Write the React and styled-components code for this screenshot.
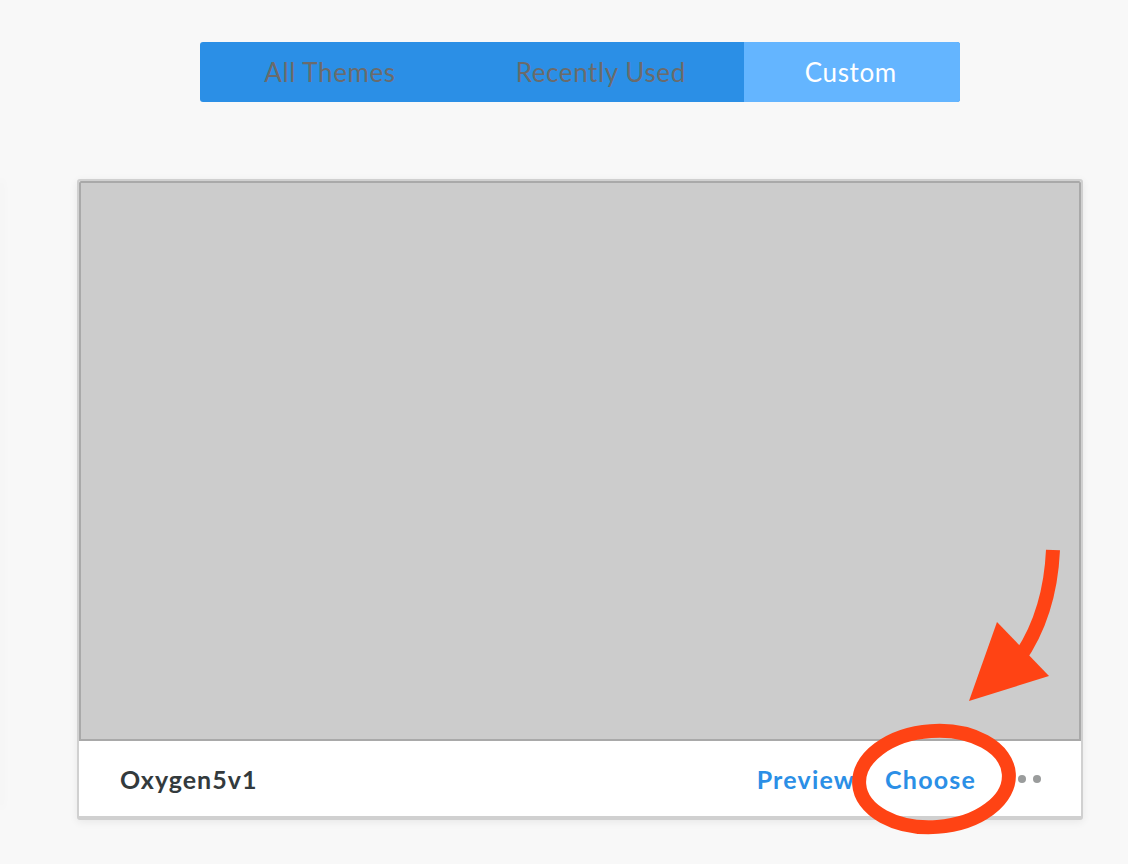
import React from "react"
import styled, { createGlobalStyle } from "styled-components"

const GlobalStyle = createGlobalStyle`
	html, body {
		margin: 0;
		padding: 0;
		background: #f8f8f8;
		overflow: hidden;
	}
	body {
		font-family: "Lato", "Open Sans", sans-serif;
	}
`

const Page = styled.div`
	width: 1128px;
	height: 864px;
	padding-top: 42px;
	box-sizing: border-box;
	background: #f8f8f8;
`

const TabsWrap = styled.div`
	display: flex;
	justify-content: center;
	padding-left: 32px;
`

const Tabs = styled.nav`
	display: flex;
	height: 60px;
	border-radius: 3px;
	overflow: hidden;
	background: #2b8fe6;
`

const Tab = styled.button`
	border: 0;
	margin: 0;
	padding: 0 ${p => p.$pr || 60}px 0 ${p => p.$pl || 60}px;
	height: 100%;
	font-family: "Lato", sans-serif;
	font-size: 26px;
	font-weight: 400;
	letter-spacing: 0.6px;
	background: ${p => (p.$active ? "#64b5ff" : "transparent")};
	color: ${p => (p.$active ? "#ffffff" : "#6b6b6b")};
	cursor: pointer;
`

const Carousel = styled.div`
	display: flex;
	margin-top: 77px;
`

const PeekEdge = styled.div`
	width: 2px;
	height: 630px;
	margin-left: -2px;
	box-shadow: 2px 0 10px rgba(0, 0, 0, 0.06);
	background: #f8f8f8;
`

const Card = styled.article`
	position: relative;
	width: 1006px;
	margin-left: 77px;
	box-sizing: border-box;
	border: 2px solid #d0d0d0;
	border-bottom-width: 4px;
	border-radius: 3px;
	background: #fff;
	box-shadow: 0 2px 8px rgba(0, 0, 0, 0.07);
`

const Thumb = styled.div`
	height: 560px;
	box-sizing: border-box;
	background: #cccccc;
	border: 2px solid #a9a9a9;
	border-radius: 2px 2px 0 0;
`

const Footer = styled.div`
	display: flex;
	align-items: center;
	height: 75px;
	padding: 0 40px 0 41px;
`

const Name = styled.h3`
	margin: 0;
	flex: 1;
	font-family: "Lato", sans-serif;
	font-size: 25px;
	font-weight: 700;
	color: #333a3d;
	letter-spacing: 1px;
`

const Action = styled.a`
	font-family: "Lato", sans-serif;
	font-size: 25px;
	font-weight: 700;
	color: #2b8fe6;
	letter-spacing: 1.2px;
	margin-left: ${p => p.$gap || 0}px;
	text-decoration: none;
`

const Dots = styled.div`
	display: flex;
	gap: 7px;
	margin-left: 27px;

	span {
		width: 8px;
		height: 8px;
		border-radius: 50%;
		background: #9a9c9c;
	}
`

const Annotation = styled.svg`
	position: absolute;
	left: -79px;
	top: -181px;
	width: 1128px;
	height: 864px;
	pointer-events: none;
	overflow: visible;
`

export default function App() {
	return (
		<>
			<GlobalStyle />
			<Page>
				<TabsWrap>
					<Tabs>
						<Tab $pl={64} $pr={60}>All Themes</Tab>
						<Tab $pl={60} $pr={58}>Recently Used</Tab>
						<Tab $active $pl={61} $pr={63}>Custom</Tab>
					</Tabs>
				</TabsWrap>
				<Carousel>
					<PeekEdge />
					<Card>
						<Thumb />
						<Footer>
							<Name>Oxygen5v1</Name>
							<Action href="#">Preview</Action>
							<Action href="#" $gap={30}>Choose</Action>
							<Dots>
								<span />
								<span />
								<span />
							</Dots>
						</Footer>
						<Annotation viewBox="0 0 1128 864">
							<ellipse cx="934" cy="779" rx="75" ry="48" fill="none" stroke="#ff4314" strokeWidth="14" transform="rotate(-4 934 779)" />
							<path d="M1053 550 Q1050 615 1018 660" fill="none" stroke="#ff4314" strokeWidth="14" />
							<polygon points="997,622 1049,676 969,701" fill="#ff4314" />
						</Annotation>
					</Card>
				</Carousel>
			</Page>
		</>
	)
}
